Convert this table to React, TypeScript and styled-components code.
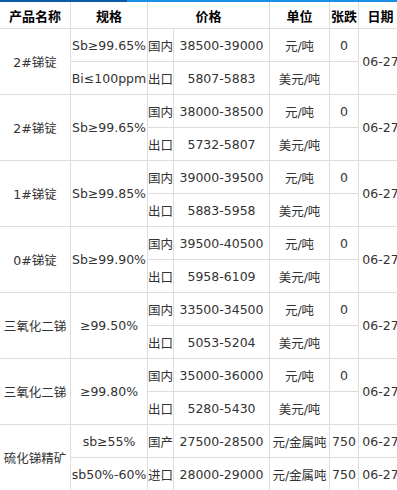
import React from "react";
import styled, { createGlobalStyle } from "styled-components";

const GlobalStyle = createGlobalStyle`
	html, body {
		margin: 0;
		padding: 0;
		background: #fff;
		overflow: hidden;
	}
	body {
		font-family: "DejaVu Sans", "Noto Sans CJK SC", sans-serif;
	}
`;

const Wrap = styled.div`
	width: 397px;
	overflow: hidden;
`;

const TopBar = styled.div`
	display: flex;
	height: 2px;
`;

const BarPart = styled.div<{ $dark?: boolean }>`
	height: 2px;
	width: ${(p) => (p.$dark ? "127px" : "auto")};
	flex: ${(p) => (p.$dark ? "none" : "1")};
	background: ${(p) => (p.$dark ? "#0b5aa6" : "#1890e6")};
`;

const PriceTable = styled.table`
	table-layout: fixed;
	border-collapse: collapse;
	width: 403px;
	margin-left: -1px;
`;

const HeadCell = styled.th`
	height: 26px;
	padding: 0;
	border: 1px solid #dddddd;
	border-top: none;
	font-family: "Noto Sans CJK SC", sans-serif;
	font-size: 13px;
	font-weight: bold;
	color: #000;
	text-align: center;
	vertical-align: middle;
	white-space: nowrap;
`;

const Cell = styled.td`
	height: 32px;
	padding: 0;
	border: 1px solid #dddddd;
	font-size: 12.5px;
	color: #333;
	text-align: center;
	vertical-align: middle;
	white-space: nowrap;
	overflow: visible;
`;

interface Line {
	market: string;
	price: string;
	unit: string;
	change: string;
	spec?: string;
	date?: string;
}

interface Group {
	name: string;
	spec?: string;
	date?: string;
	lines: Line[];
}

const groups: Group[] = [
	{
		name: "2#锑锭",
		date: "06-27",
		lines: [
			{ spec: "Sb≥99.65%", market: "国内", price: "38500-39000", unit: "元/吨", change: "0" },
			{ spec: "Bi≤100ppm", market: "出口", price: "5807-5883", unit: "美元/吨", change: "" },
		],
	},
	{
		name: "2#锑锭",
		spec: "Sb≥99.65%",
		date: "06-27",
		lines: [
			{ market: "国内", price: "38000-38500", unit: "元/吨", change: "0" },
			{ market: "出口", price: "5732-5807", unit: "美元/吨", change: "" },
		],
	},
	{
		name: "1#锑锭",
		spec: "Sb≥99.85%",
		date: "06-27",
		lines: [
			{ market: "国内", price: "39000-39500", unit: "元/吨", change: "0" },
			{ market: "出口", price: "5883-5958", unit: "美元/吨", change: "" },
		],
	},
	{
		name: "0#锑锭",
		spec: "Sb≥99.90%",
		date: "06-27",
		lines: [
			{ market: "国内", price: "39500-40500", unit: "元/吨", change: "0" },
			{ market: "出口", price: "5958-6109", unit: "美元/吨", change: "" },
		],
	},
	{
		name: "三氧化二锑",
		spec: "≥99.50%",
		date: "06-27",
		lines: [
			{ market: "国内", price: "33500-34500", unit: "元/吨", change: "0" },
			{ market: "出口", price: "5053-5204", unit: "美元/吨", change: "" },
		],
	},
	{
		name: "三氧化二锑",
		spec: "≥99.80%",
		date: "06-27",
		lines: [
			{ market: "国内", price: "35000-36000", unit: "元/吨", change: "0" },
			{ market: "出口", price: "5280-5430", unit: "美元/吨", change: "" },
		],
	},
	{
		name: "硫化锑精矿",
		lines: [
			{ spec: "sb≥55%", market: "国产", price: "27500-28500", unit: "元/金属吨", change: "750", date: "06-27" },
			{ spec: "sb50%-60%", market: "进口", price: "28000-29000", unit: "元/金属吨", change: "750", date: "06-27" },
		],
	},
];

export default function App() {
	return (
		<Wrap>
			<GlobalStyle />
			<TopBar>
				<BarPart $dark />
				<BarPart />
			</TopBar>
			<PriceTable>
				<colgroup>
					<col style={{ width: 71 }} />
					<col style={{ width: 77 }} />
					<col style={{ width: 26 }} />
					<col style={{ width: 96 }} />
					<col style={{ width: 60 }} />
					<col style={{ width: 29 }} />
					<col style={{ width: 44 }} />
				</colgroup>
				<thead>
					<tr>
						<HeadCell>产品名称</HeadCell>
						<HeadCell>规格</HeadCell>
						<HeadCell colSpan={2}>价格</HeadCell>
						<HeadCell>单位</HeadCell>
						<HeadCell>张跌</HeadCell>
						<HeadCell>日期</HeadCell>
					</tr>
				</thead>
				<tbody>
					{groups.map((g, gi) =>
						g.lines.map((line, li) => (
							<tr key={gi + "-" + li}>
								{li === 0 && <Cell rowSpan={g.lines.length}>{g.name}</Cell>}
								{g.spec ? (
									li === 0 && <Cell rowSpan={g.lines.length}>{g.spec}</Cell>
								) : (
									<Cell>{line.spec}</Cell>
								)}
								<Cell>{line.market}</Cell>
								<Cell>{line.price}</Cell>
								<Cell>{line.unit}</Cell>
								<Cell>{line.change}</Cell>
								{g.date ? (
									li === 0 && <Cell rowSpan={g.lines.length}>{g.date}</Cell>
								) : (
									<Cell>{line.date}</Cell>
								)}
							</tr>
						))
					)}
				</tbody>
			</PriceTable>
		</Wrap>
	);
}
